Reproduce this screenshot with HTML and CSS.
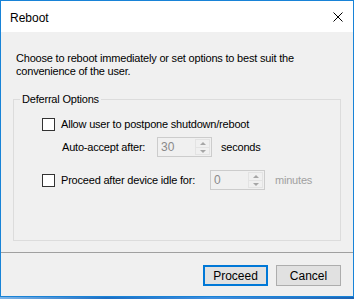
FILE: index.html
```html
<!DOCTYPE html>
<html lang="en">
<head>
    <meta charset="UTF-8">
    <title>Reboot</title>
    <link rel="stylesheet" href="styles.css">
</head>
<body>

    <div class="window">
        <div class="title-bar">
            <span class="title">Reboot</span>
            <svg class="close" width="10" height="10" viewBox="0 0 10 10">
                <path d="M0.5 0.5 L9.5 9.5 M9.5 0.5 L0.5 9.5" stroke="#000" stroke-width="1" fill="none"/>
            </svg>
        </div>

        <div class="content">
            <p class="intro">Choose to reboot immediately or set options to best suit the convenience of the user.</p>

            <fieldset class="group">
                <legend>Deferral Options</legend>

                <div class="row row-first">
                    <span class="check"></span>
                    <span class="label">Allow user to postpone shutdown/reboot</span>
                </div>

                <div class="row row-sub">
                    <span class="label label-auto">Auto-accept after:</span>
                    <div class="spin">
                        <span class="spin-value">30</span>
                        <div class="spin-buttons">
                            <span class="spin-up"></span>
                            <span class="spin-down"></span>
                        </div>
                    </div>
                    <span class="unit">seconds</span>
                </div>

                <div class="row row-idle">
                    <span class="check"></span>
                    <span class="label label-idle">Proceed after device idle for:</span>
                    <div class="spin">
                        <span class="spin-value">0</span>
                        <div class="spin-buttons">
                            <span class="spin-up"></span>
                            <span class="spin-down"></span>
                        </div>
                    </div>
                    <span class="unit unit-disabled">minutes</span>
                </div>
            </fieldset>
        </div>

        <div class="footer">
            <button class="btn btn-default">Proceed</button>
            <button class="btn">Cancel</button>
        </div>
    </div>

</body>
</html>
```

FILE: styles.css
```css
* {
    box-sizing: border-box;
}

html, body {
    height: 100%;
}

body {
    margin: 0;
    background: linear-gradient(90deg, #7fb4e6, #1d6fc4 30%, #3f8ede 60%, #1b63b3);
    font-family: "Liberation Sans", Arial, sans-serif;
    font-size: 11px;
    color: #000;
    overflow: hidden;
}

/*--------------------
Window
--------------------*/
.window {
    width: 354px;
    height: 297px;
    border: 1px solid #1883d7;
    background: #f0f0f0;
    display: flex;
    flex-direction: column;
}

.title-bar {
    height: 31px;
    flex: 0 0 31px;
    background: #fff;
    display: flex;
    align-items: center;
    padding: 0 9px;
}

.title {
    flex: 1;
    font-size: 12px;
    margin-top: 2px;
}

.close {
    margin-right: 1px;
    margin-top: 1px;
}

/*--------------------
Content
--------------------*/
.content {
    flex: 1 1 auto;
    padding: 20px 12px 0;
    letter-spacing: -0.2px;
}

.intro {
    margin: 0;
    padding-left: 3px;
    line-height: 13px;
    width: 300px;
}

.group {
    margin: 15px 0 0;
    padding: 0 6px 50px;
    border: 1px solid #dcdcdc;
    min-width: 0;
}

.group legend {
    padding: 0 2px;
    line-height: 13px;
}

.row {
    display: flex;
    align-items: center;
    line-height: 13px;
}

.row-first {
    margin-top: 12px;
    padding-left: 22px;
}

.row-sub {
    margin-top: 6px;
    padding-left: 42px;
}

.row-idle {
    margin-top: 13px;
    padding-left: 22px;
}

.check {
    width: 13px;
    height: 13px;
    border: 1px solid #333;
    background: #fff;
    margin-right: 6px;
}

.label-auto {
    width: 95px;
}

.label-idle {
    width: 149px;
}

/* disabled numeric up-down */
.spin {
    width: 55px;
    height: 20px;
    border: 1px solid #cccccc;
    display: flex;
    padding: 1px;
}

.spin-value {
    flex: 1;
    color: #8a8a8a;
    padding: 2px 0 0 2px;
    font-size: 12px;
    letter-spacing: 0;
}

.spin-buttons {
    width: 15px;
    display: flex;
    flex-direction: column;
    border: 1px solid #e3e3e3;
}

.spin-up,
.spin-down {
    flex: 1;
    position: relative;
}

.spin-up {
    border-bottom: 1px solid #e3e3e3;
}

.spin-up::after,
.spin-down::after {
    content: "";
    position: absolute;
    left: 4px;
    top: 2px;
    border-left: 3px solid transparent;
    border-right: 3px solid transparent;
}

.spin-up::after {
    border-bottom: 3px solid #a6a6a6;
}

.spin-down::after {
    top: 2px;
    border-top: 3px solid #a6a6a6;
}

.unit {
    margin-left: 9px;
}

.unit-disabled {
    margin-left: 10px;
    color: #a0a0a0;
}

/*--------------------
Footer
--------------------*/
.footer {
    flex: 0 0 44px;
    border-top: 1px solid #a0a0a0;
    display: flex;
    justify-content: flex-end;
    gap: 8px;
    padding: 12px 12px 0;
}

.btn {
    width: 65px;
    height: 21px;
    background: #e1e1e1;
    border: 1px solid #adadad;
    font-family: "Liberation Sans", Arial, sans-serif;
    font-size: 12px;
    color: #000;
    padding: 0;
}

.btn-default {
    border: 2px solid #0078d7;
}
```
